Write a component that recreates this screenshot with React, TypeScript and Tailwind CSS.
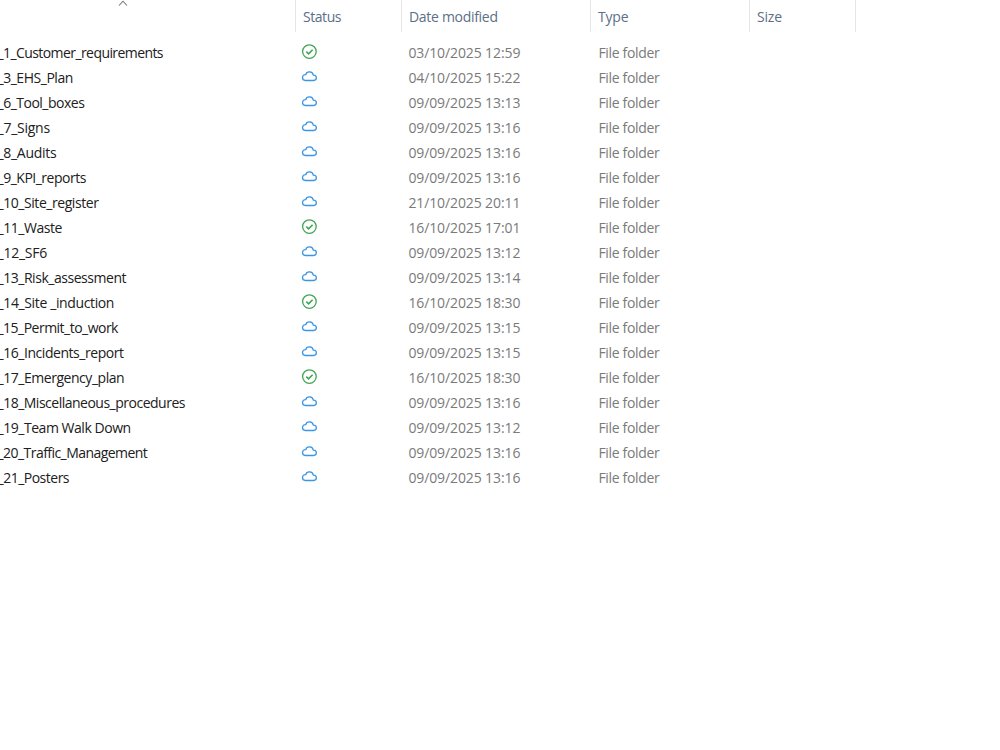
import clsx from "clsx";

type SyncStatus = "synced" | "cloud";

interface Folder {
  name: string;
  status: SyncStatus;
  modified: string;
  tracking: string;
}

const folders: Folder[] = [
  { name: "_1_Customer_requirements", status: "synced", modified: "03/10/2025 12:59", tracking: "tracking-[-0.58px]" },
  { name: "_3_EHS_Plan", status: "cloud", modified: "04/10/2025 15:22", tracking: "tracking-[-0.47px]" },
  { name: "_6_Tool_boxes", status: "cloud", modified: "09/09/2025 13:13", tracking: "tracking-[-0.5px]" },
  { name: "_7_Signs", status: "cloud", modified: "09/09/2025 13:16", tracking: "tracking-[-0.25px]" },
  { name: "_8_Audits", status: "cloud", modified: "09/09/2025 13:16", tracking: "tracking-[-0.3px]" },
  { name: "_9_KPI_reports", status: "cloud", modified: "09/09/2025 13:16", tracking: "tracking-[-0.49px]" },
  { name: "_10_Site_register", status: "cloud", modified: "21/10/2025 20:11", tracking: "tracking-[-0.44px]" },
  { name: "_11_Waste", status: "synced", modified: "16/10/2025 17:01", tracking: "tracking-[-0.46px]" },
  { name: "_12_SF6", status: "cloud", modified: "09/09/2025 13:12", tracking: "tracking-[-0.25px]" },
  { name: "_13_Risk_assessment", status: "cloud", modified: "09/09/2025 13:14", tracking: "tracking-[-0.46px]" },
  { name: "_14_Site _induction", status: "synced", modified: "16/10/2025 18:30", tracking: "tracking-[-0.37px]" },
  { name: "_15_Permit_to_work", status: "cloud", modified: "09/09/2025 13:15", tracking: "tracking-[-0.52px]" },
  { name: "_16_Incidents_report", status: "cloud", modified: "09/09/2025 13:15", tracking: "tracking-[-0.45px]" },
  { name: "_17_Emergency_plan", status: "synced", modified: "16/10/2025 18:30", tracking: "tracking-[-0.46px]" },
  { name: "_18_Miscellaneous_procedures", status: "cloud", modified: "09/09/2025 13:16", tracking: "tracking-[-0.5px]" },
  { name: "_19_Team Walk Down", status: "cloud", modified: "09/09/2025 13:12", tracking: "tracking-[-0.46px]" },
  { name: "_20_Traffic_Management", status: "cloud", modified: "09/09/2025 13:16", tracking: "tracking-[-0.55px]" },
  { name: "_21_Posters", status: "cloud", modified: "09/09/2025 13:16", tracking: "tracking-[-0.5px]" },
];

const columns = "grid grid-cols-[295px_106px_190px_158px_107px]";

function SyncedIcon() {
  return (
    <svg width="17" height="16" viewBox="0 0 17 16" fill="none" stroke="#3fa652" strokeWidth="1.3">
      <circle cx="8.4" cy="7.6" r="6.8" />
      <path d="M5.3 7.7 7.6 9.9 11.6 5.8" strokeWidth="1.6" />
    </svg>
  );
}

function CloudIcon() {
  return (
    <svg width="17" height="16" viewBox="0 0 17 16" fill="none" stroke="#3b96e6" strokeWidth="1.3" strokeLinejoin="round">
      <path d="M4.4 11.5h8.2a2.7 2.7 0 0 0 .1-5.4h-.4A3.9 3.9 0 0 0 4.7 5.7h-.3a2.9 2.9 0 0 0 0 5.8Z" />
    </svg>
  );
}

function HeaderCell({ label, className }: { label: string; className?: string }) {
  return <div className={clsx("border-l border-[#e6e6e6] pl-[7px] leading-[34px]", className)}>{label}</div>;
}

function FolderRow({ folder }: { folder: Folder }) {
  return (
    <div className={clsx(columns, "h-[25px] leading-[25px] text-[#7a7a7a]")}>
      <span className={clsx("-ml-[2.5px] text-[#202020]", folder.tracking)}>{folder.name}</span>
      <span className="pt-1 pl-[6px]">
        {folder.status === "synced" ? <SyncedIcon /> : <CloudIcon />}
      </span>
      <span className="pl-[7.4px] tracking-[-0.11px]">{folder.modified}</span>
      <span className="pl-[7.4px] tracking-[-0.32px]">File folder</span>
      <span />
    </div>
  );
}

export default function App() {
  return (
    <main className="h-[750px] w-[1000px] overflow-hidden whitespace-nowrap bg-white font-['Open_Sans',sans-serif] text-[14px]">
      <header className={clsx(columns, "h-8 overflow-hidden text-[#5b6f86]")}>
        <div className="pl-[118px]">
          <svg width="10" height="8" viewBox="0 0 10 8" fill="none" stroke="#777777" strokeWidth="1.1">
            <path d="M1 5.5 5 1.2 9 5.5" />
          </svg>
        </div>
        <HeaderCell label="Status" className="tracking-[-0.45px]" />
        <HeaderCell label="Date modified" className="tracking-[-0.3px]" />
        <HeaderCell label="Type" className="-ml-px tracking-[-0.2px]" />
        <HeaderCell label="Size" className="border-r tracking-[-0.2px]" />
      </header>
      <section className="pt-2">
        {folders.map((folder) => (
          <FolderRow key={folder.name} folder={folder} />
        ))}
      </section>
    </main>
  );
}
